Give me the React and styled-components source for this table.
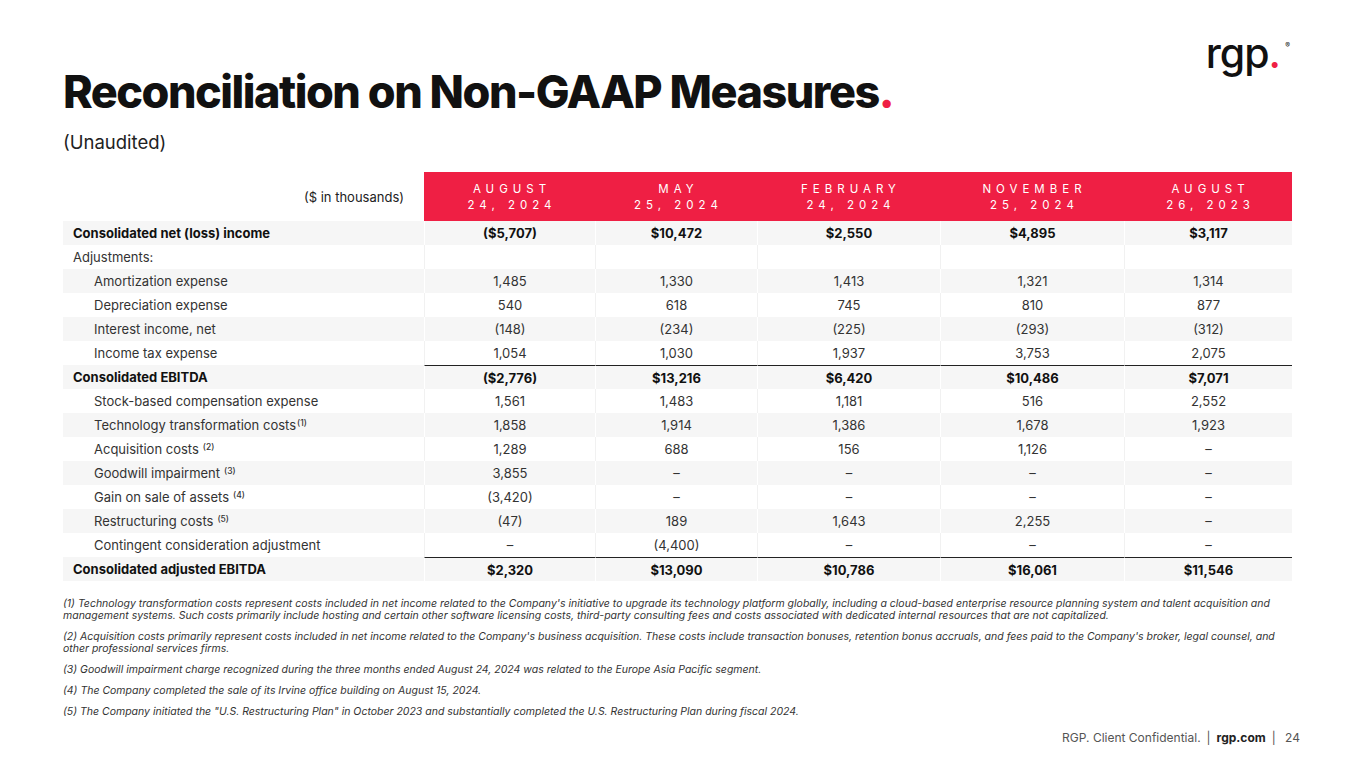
import React from 'react'
import styled, { createGlobalStyle } from 'styled-components'

const GlobalStyle = createGlobalStyle`
  html, body {
    margin: 0;
    padding: 0;
    background: #fff;
  }
  body {
    font-family: Inter, "Noto Sans", "Liberation Sans", sans-serif;
    color: #222;
  }
`

const RED = '#EF1F44'

const Page = styled.div`
  width: 1365px;
  height: 768px;
  box-sizing: border-box;
  padding: 0 73px 0 63px;
  display: flex;
  flex-direction: column;
  overflow: hidden;
`

const TopBar = styled.div`
  display: flex;
  justify-content: flex-end;
  align-items: flex-start;
  height: 31px;
  padding-top: 33px;
  padding-right: 2px;
`

const Logo = styled.div`
  font-size: 41px;
  font-weight: 500;
  letter-spacing: -1px;
  line-height: 1;
  color: #111;
  position: relative;
  padding-right: 10px;
  height: 31px;
`

const LogoDot = styled.span`
  color: ${RED};
`

const LogoMark = styled.span`
  position: absolute;
  right: 0;
  top: 9px;
  font-size: 7px;
  font-weight: 400;
  letter-spacing: 0;
`

const Title = styled.h1`
  margin: 0;
  font-size: 45px;
  font-weight: 800;
  letter-spacing: -1.5px;
  line-height: 56px;
  color: #111;
`

const Dot = styled.span`
  color: ${RED};
`

const Subtitle = styled.div`
  font-size: 18.5px;
  font-weight: 400;
  color: #222;
  margin-top: 10px;
  line-height: 24px;
`

const Table = styled.div`
  display: grid;
  grid-template-columns: 361px 171px 162px 183px 184px 168px;
  grid-template-rows: 49px;
  grid-auto-rows: 24px;
  margin-top: 18px;
  width: 1229px;
`

const CornerCell = styled.div`
  display: flex;
  align-items: center;
  justify-content: flex-end;
  padding-right: 20px;
  font-size: 13px;
  color: #222;
`

const HeadCell = styled.div`
  background: ${RED};
  color: #fff;
  display: flex;
  flex-direction: column;
  align-items: center;
  justify-content: center;
  font-size: 11.5px;
  letter-spacing: 5px;
  line-height: 16px;
  padding-left: ${p => p.$shift || 0}px;
`

const LabelCell = styled.div`
  background: ${p => (p.$shade ? '#f6f6f6' : '#fff')};
  display: flex;
  align-items: center;
  padding-left: ${p => (p.$indent ? 31 : 10)}px;
  font-size: 13px;
  font-weight: ${p => (p.$bold ? 700 : 400)};
  color: ${p => (p.$bold ? '#111' : '#333')};
  white-space: nowrap;
`

const ValueCell = styled.div`
  background: ${p => (p.$shade ? '#f6f6f6' : '#fff')};
  border-left: 1px solid ${p => (p.$shade ? '#fff' : '#f1f1f1')};
  border-top: ${p => (p.$rule ? '1.5px solid #222' : '0')};
  display: flex;
  align-items: center;
  justify-content: center;
  font-size: 13px;
  font-weight: ${p => (p.$bold ? 700 : 400)};
  color: ${p => (p.$bold ? '#111' : '#333')};
  box-sizing: border-box;
`

const Note = styled.sup`
  font-size: 8.5px;
  font-weight: 500;
  margin-left: ${p => (p.$tight ? 1 : 4)}px;
  position: relative;
  top: -2px;
`

const Footnotes = styled.div`
  margin-top: 17px;
  font-size: 10.5px;
  font-style: italic;
  color: #333;
  line-height: 12px;
  display: flex;
  flex-direction: column;
  gap: 9px;
  white-space: nowrap;
`

const Footer = styled.div`
  margin-top: auto;
  margin-bottom: 23px;
  margin-right: -8px;
  display: flex;
  justify-content: flex-end;
  font-size: 12px;
  color: #555;
  gap: 6px;
`

const FooterStrong = styled.span`
  font-weight: 700;
  color: #222;
`

const headers = [
  ['AUGUST', '24, 2024'],
  ['MAY', '25, 2024'],
  ['FEBRUARY', '24, 2024'],
  ['NOVEMBER', '25, 2024'],
  ['AUGUST', '26, 2023'],
]

const rows = [
  { label: 'Consolidated net (loss) income', bold: true, values: ['($5,707)', '$10,472', '$2,550', '$4,895', '$3,117'] },
  { label: 'Adjustments:', values: ['', '', '', '', ''] },
  { label: 'Amortization expense', indent: true, values: ['1,485', '1,330', '1,413', '1,321', '1,314'] },
  { label: 'Depreciation expense', indent: true, values: ['540', '618', '745', '810', '877'] },
  { label: 'Interest income, net', indent: true, values: ['(148)', '(234)', '(225)', '(293)', '(312)'] },
  { label: 'Income tax expense', indent: true, values: ['1,054', '1,030', '1,937', '3,753', '2,075'] },
  { label: 'Consolidated EBITDA', bold: true, rule: true, values: ['($2,776)', '$13,216', '$6,420', '$10,486', '$7,071'] },
  { label: 'Stock-based compensation expense', indent: true, values: ['1,561', '1,483', '1,181', '516', '2,552'] },
  { label: 'Technology transformation costs', note: '(1)', tight: true, indent: true, values: ['1,858', '1,914', '1,386', '1,678', '1,923'] },
  { label: 'Acquisition costs', note: '(2)', indent: true, values: ['1,289', '688', '156', '1,126', '–'] },
  { label: 'Goodwill impairment', note: '(3)', indent: true, values: ['3,855', '–', '–', '–', '–'] },
  { label: 'Gain on sale of assets', note: '(4)', indent: true, values: ['(3,420)', '–', '–', '–', '–'] },
  { label: 'Restructuring costs', note: '(5)', indent: true, values: ['(47)', '189', '1,643', '2,255', '–'] },
  { label: 'Contingent consideration adjustment', indent: true, values: ['–', '(4,400)', '–', '–', '–'] },
  { label: 'Consolidated adjusted EBITDA', bold: true, rule: true, values: ['$2,320', '$13,090', '$10,786', '$16,061', '$11,546'] },
]

const notes = [
  [
    "(1) Technology transformation costs represent costs included in net income related to the Company's initiative to upgrade its technology platform globally, including a cloud-based enterprise resource planning system and talent acquisition and",
    'management systems. Such costs primarily include hosting and certain other software licensing costs, third-party consulting fees and costs associated with dedicated internal resources that are not capitalized.',
  ],
  [
    "(2) Acquisition costs primarily represent costs included in net income related to the Company's business acquisition. These costs include transaction bonuses, retention bonus accruals, and fees paid to the Company's broker, legal counsel, and",
    'other professional services firms.',
  ],
  ['(3) Goodwill impairment charge recognized during the three months ended August 24, 2024 was related to the Europe Asia Pacific segment.'],
  ['(4) The Company completed the sale of its Irvine office building on August 15, 2024.'],
  ['(5) The Company initiated the "U.S. Restructuring Plan" in October 2023 and substantially completed the U.S. Restructuring Plan during fiscal 2024.'],
]

export default function App() {
  return (
    <>
      <GlobalStyle />
      <Page>
        <TopBar>
          <Logo>
            rgp<LogoDot>.</LogoDot>
            <LogoMark>®</LogoMark>
          </Logo>
        </TopBar>
        <Title>
          Reconciliation on Non-GAAP Measures<Dot>.</Dot>
        </Title>
        <Subtitle>(Unaudited)</Subtitle>

        <Table>
          <CornerCell>($ in thousands)</CornerCell>
          {headers.map((h, i) => (
            <HeadCell key={i} $shift={5}>
              <span>{h[0]}</span>
              <span>{h[1]}</span>
            </HeadCell>
          ))}
          {rows.map((r, i) => {
            const shade = i % 2 === 0
            return (
              <React.Fragment key={r.label}>
                <LabelCell $shade={shade} $indent={r.indent} $bold={r.bold}>
                  {r.label}
                  {r.note && <Note $tight={r.tight}>{r.note}</Note>}
                </LabelCell>
                {r.values.map((v, j) => (
                  <ValueCell key={j} $shade={shade} $bold={r.bold} $rule={r.rule}>
                    {v}
                  </ValueCell>
                ))}
              </React.Fragment>
            )
          })}
        </Table>

        <Footnotes>
          {notes.map((n, i) => (
            <div key={i}>
              {n.map((line, k) => (
                <div key={k}>{line}</div>
              ))}
            </div>
          ))}
        </Footnotes>

        <Footer>
          <span>RGP. Client Confidential.</span>
          <span>|</span>
          <FooterStrong>rgp.com</FooterStrong>
          <span>|</span>
          <span>&nbsp;24</span>
        </Footer>
      </Page>
    </>
  )
}
